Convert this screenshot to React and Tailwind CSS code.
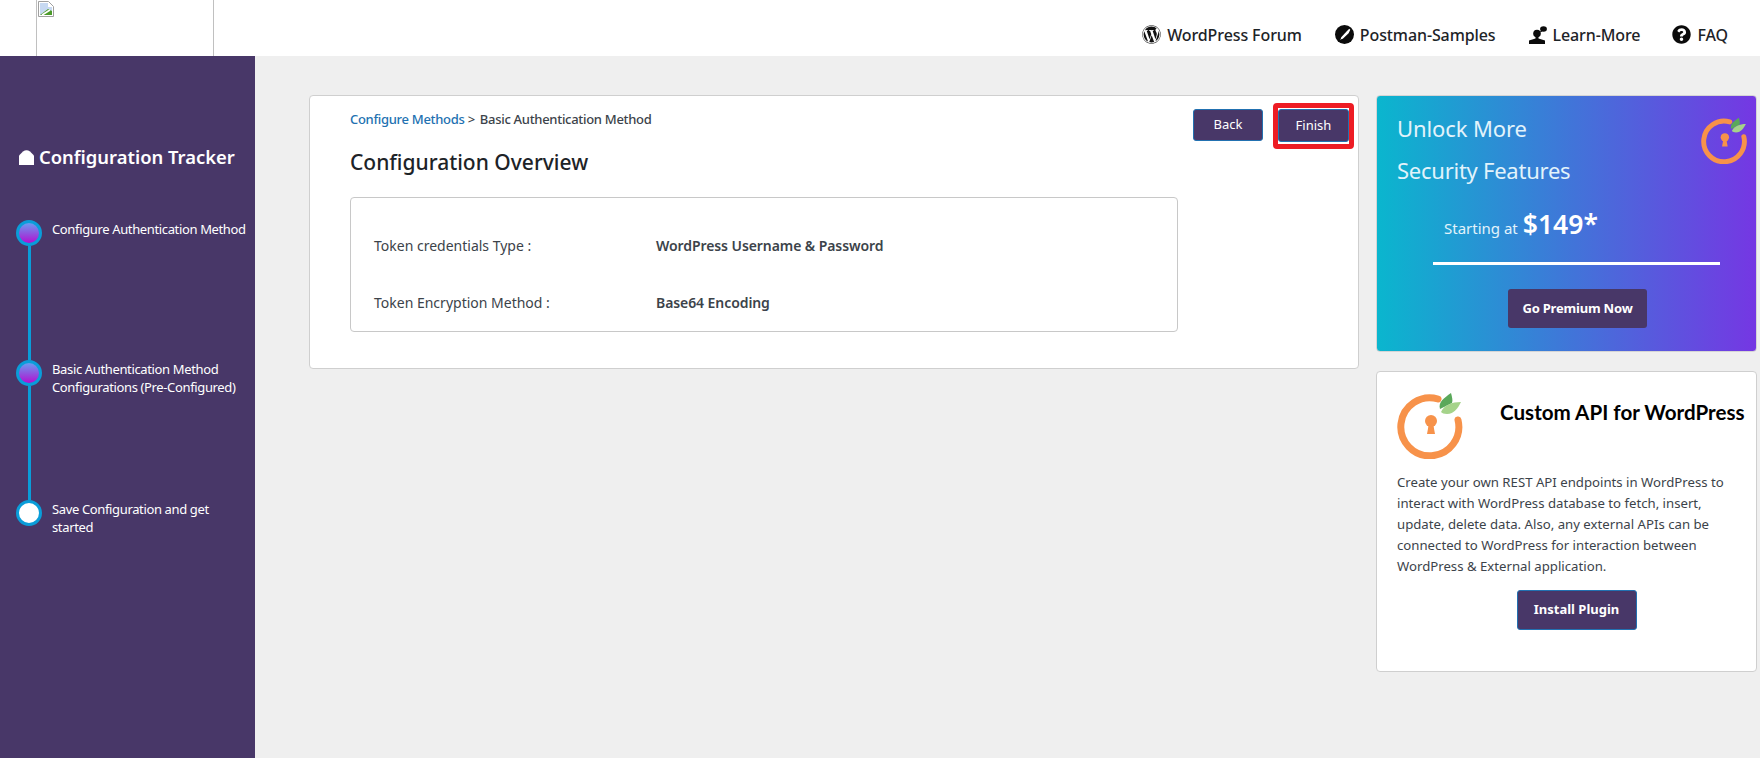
import React from 'react';
import { FaWordpress, FaQuestionCircle } from 'react-icons/fa';

const BrokenImage = () => (
    <svg width="16" height="16" viewBox="0 0 16 16" className="ml-px">
        <path d="M.5.5h10l5 5v10H.5z" fill="#fff" stroke="#a0a0a0" />
        <path d="M2 2h8v4h4v8H2z" fill="#c7d9f2" />
        <path d="M2 14l8-6 4 2v4z" fill="#4c9a2a" />
        <path d="M4 14l8-5" stroke="#fff" strokeWidth="1.5" />
    </svg>
);

const PenIcon = () => (
    <svg width="19" height="19" viewBox="0 0 18 18">
        <circle cx="9" cy="9" r="9" fill="#0b0b0b" />
        <path d="M13.5 3.6l1 1-1.6 3.2L7.4 13l-1.6.6-1.2 0.9.8-1.3.5-1.6 5-5.4z" fill="#fff" />
    </svg>
);

const LearnIcon = () => (
    <svg width="22" height="18" viewBox="0 0 22 18">
        <circle cx="9" cy="7.5" r="3.8" fill="#0b0b0b" />
        <path d="M7.5 10h3v2.6l6.5 1.8V18H1v-3.6l6.5-1.8z" fill="#0b0b0b" />
        <ellipse cx="15.5" cy="3" rx="3.4" ry="2.8" fill="#0b0b0b" />
        <path d="M13 4.5l-1.5 2 3-1z" fill="#0b0b0b" />
    </svg>
);

const Logo = ({ size }) => (
    <svg width={size} height={size} viewBox="11 11 67 67" className="shrink-0">
        <path d="M52 18A29 29 0 1 0 72 39" fill="none" stroke="#f7924a" strokeWidth="7" strokeLinecap="round" />
        <circle cx="45" cy="40" r="6" fill="#f7924a" />
        <path d="M43 42h4l2 11h-8z" fill="#f7924a" />
        <path d="M54 28C52 21 58 17 65 12c1 4 2 7 1 10z" fill="#5aa85a" />
        <path d="M55 31c3-7 11-10 20-10-3 6-7 12-14 12-3 0-5-1-6-2z" fill="#a5d38a" />
    </svg>
);

const Step = ({ done, last, lines }) => (
    <div className={`flex gap-[10px] ${last ? '' : 'h-[140px]'}`}>
        <div className="flex flex-col items-center w-[26px] shrink-0">
            <div className={`w-[26px] h-[26px] rounded-full border-[3px] border-[#0a9dd9] shrink-0 ${done ? 'bg-linear-to-b/srgb from-[#6a9cf0] to-[#b30fd0]' : 'bg-white'}`}></div>
            {!last && <div className="w-[3px] flex-1 bg-[#0a9dd9]"></div>}
        </div>
        <div className="text-[13px] leading-[18px] tracking-[-0.36px] text-white whitespace-nowrap">
            {lines.map(l => <div key={l}>{l}</div>)}
        </div>
    </div>
);

const Row = ({ label, value, className }) => (
    <div className={`flex text-[14px] text-[#3c434a] ${className}`}>
        <div className="w-[282px]">{label}</div>
        <div className="font-semibold tracking-[-0.08px]">{value}</div>
    </div>
);

const App = () => {
    return (
        <div className="h-screen overflow-hidden bg-[#efefef] flex flex-col font-['Noto_Sans',sans-serif]">
            <header className="h-[56px] bg-white flex shrink-0 overflow-hidden">
                <div className="ml-[36px] w-[178px] h-[70px] border border-[#c0c0c0] -mt-px pt-px">
                    <BrokenImage />
                </div>
                <nav className="ml-auto flex items-center pt-[13px] pr-[32px] text-[16px] tracking-[-0.1px] font-medium text-[#1d2327]">
                    <a className="flex items-center gap-[6px]"><FaWordpress className="text-[19px] text-[#111]" />WordPress Forum</a>
                    <a className="flex items-center gap-[6px] ml-[33px]"><PenIcon />Postman-Samples</a>
                    <a className="flex items-center gap-[3px] ml-[32px]"><LearnIcon />Learn-More</a>
                    <a className="flex items-center gap-[6px] ml-[32px]"><FaQuestionCircle className="text-[19px] text-[#0b0b0b]" />FAQ</a>
                </nav>
            </header>
            <div className="flex flex-1 min-h-0">
                <aside className="w-[255px] bg-[#483768] shrink-0 pt-[88px]">
                    <div className="flex items-center gap-[5px] pl-[19px] text-white text-[18.4px] font-semibold leading-[26px]">
                        <svg width="15" height="15" viewBox="0 0 15 15"><path d="M0 15V5.5L4 1.5Q7.5-1 11 1.5L15 5.5V15z" fill="#fff" /></svg>
                        Configuration Tracker
                    </div>
                    <div className="pl-[16px] mt-[50px]">
                        <Step done lines={['Configure Authentication Method']} />
                        <Step done lines={['Basic Authentication Method', 'Configurations (Pre-Configured)']} />
                        <Step last lines={['Save Configuration and get', 'started']} />
                    </div>
                </aside>
                <main className="flex items-start pt-[39px] pl-[54px] gap-[17px]">
                    <section className="relative w-[1050px] h-[274px] bg-white border border-[#cfcfcf] rounded-[4px] pl-[40px] pt-[14px]">
                        <div className="text-[13px] tracking-[-0.3px] font-medium text-[#3c434a]">
                            <span className="text-[#2271b1]">Configure Methods</span> <span className="mr-[2px]">&gt;</span> Basic Authentication Method
                        </div>
                        <h1 className="text-[21px] font-medium text-[#1d2327] mt-[17px] leading-[30px]">Configuration Overview</h1>
                        <div className="w-[828px] h-[135px] mt-[20px] border border-[#c8c8c8] rounded-[4px] pl-[23px] pt-[37px]">
                            <Row label="Token credentials Type :" value="WordPress Username & Password" />
                            <Row label="Token Encryption Method :" value="Base64 Encoding" className="mt-[36px]" />
                        </div>
                        <div className="absolute top-[7px] left-[883px] flex items-start gap-[10px]">
                            <button className="w-[70px] h-[32px] mt-[6px] bg-[#483768] border border-[#2271b1] rounded-[3px] text-white text-[13px]">Back</button>
                            <div className="w-[81px] h-[46px] bg-white border-[5px] border-[#ed1c24] rounded-[4px] pt-px">
                                <button className="block w-full h-[33px] bg-[#483768] border border-[#2271b1] rounded-[3px] text-white text-[13px]">Finish</button>
                            </div>
                        </div>
                    </section>
                    <div className="w-[381px] flex flex-col gap-[19px]">
                        <section className="relative h-[257px] rounded-[4px] border border-[#d5d5d5] bg-linear-to-r/srgb from-[#0ab6ce] to-[#7537e3] pl-[20px] pt-[11px]">
                            <div className="text-[22px] leading-[42px] tracking-[-0.1px] text-[#e2f3fb]">Unlock More</div>
                            <div className="text-[22px] leading-[42px] tracking-[-0.25px] text-[#e2f3fb]">Security Features</div>
                            <div className="absolute right-[8px] top-[21px]"><Logo size={47} /></div>
                            <div className="flex items-baseline gap-[5px] ml-[47px] mt-[14px] text-[#e2f3fb] text-[15px]">
                                Starting at <span className="text-[26.5px] font-semibold text-white">$149*</span>
                            </div>
                            <div className="h-[3px] w-[287px] bg-white ml-[36px] mt-[17px]"></div>
                            <div className="flex justify-center pl-[2px] mt-[24px]">
                                <button className="w-[139px] h-[39px] bg-[#483768] rounded-[3px] text-white text-[13px] tracking-[-0.2px] font-bold">Go Premium Now</button>
                            </div>
                        </section>
                        <section className="h-[301px] bg-white border border-[#cfcfcf] rounded-[4px] px-[20px] pt-[20px]">
                            <div className="flex">
                                <Logo size={67} />
                                <div className="ml-[36px] mt-[5px] text-[20.6px] font-bold text-black font-['Lato',sans-serif] whitespace-nowrap">Custom API for WordPress</div>
                            </div>
                            <p className="mt-[13px] text-[13.2px] leading-[21px] text-[#3c434a] whitespace-nowrap">
                                Create your own REST API endpoints in WordPress to<br />
                                interact with WordPress database to fetch, insert,<br />
                                update, delete data. Also, any external APIs can be<br />
                                connected to WordPress for interaction between<br />
                                WordPress &amp; External application.
                            </p>
                            <div className="flex justify-center pl-[20px] mt-[13px]">
                                <button className="w-[120px] h-[40px] bg-[#483768] border border-[#2271b1] rounded-[3px] text-white text-[13px] font-bold">Install Plugin</button>
                            </div>
                        </section>
                    </div>
                </main>
            </div>
        </div>
    );
};

export default App;
